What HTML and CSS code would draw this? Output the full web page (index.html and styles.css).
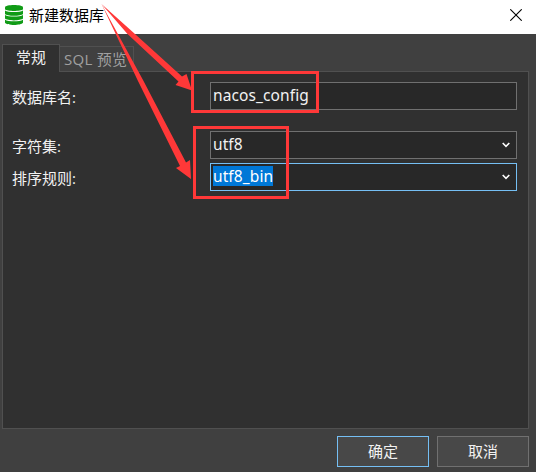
FILE: index.html
```html
<!DOCTYPE html>
<html lang="zh-CN">
<head>
<meta charset="utf-8">
<title>新建数据库</title>
<link rel="stylesheet" href="styles.css">
</head>
<body>
<div class="dialog">
  <header class="titlebar">
    <svg class="db-icon" width="18" height="20" viewBox="0 0 18 20">
      <g fill="#109b16">
        <path d="M0 2.400C0-.8 18-.8 18 2.400V4.200C16 6.500 2 6.500 0 4.200Z"/>
        <path d="M0 5.400C3 7.400 15 7.400 18 5.400V8.900C16 11.300 2 11.300 0 8.900Z"/>
        <path d="M0 10.100C3 12.100 15 12.100 18 10.100V13.600C16 16 2 16 0 13.600Z"/>
        <path d="M0 14.800C3 16.800 15 16.800 18 14.800V17.800C16 20.700 2 20.700 0 17.800Z"/>
      </g>
    </svg>
    <span class="title">新建数据库</span>
    <svg class="close" width="12" height="12" viewBox="0 0 12 12"><path d="M.3.3 11.700 11.700M11.700.3.3 11.700" stroke="#000" stroke-width="1.100"/></svg>
  </header>
  <nav class="tabs">
    <div class="tab active">常规</div>
    <div class="tab">SQL 预览</div>
  </nav>
  <main class="panel">
    <div class="row name-row"><label>数据库名:</label><div class="field"><span>nacos_config</span></div></div>
    <div class="row"><label>字符集:</label><div class="field"><span>utf8</span><svg class="chevron" width="8" height="6" viewBox="0 0 8 6"><path d="M.7 1 4 4.300 7.300 1" fill="none" stroke="#fff" stroke-width="1.600"/></svg></div></div>
    <div class="row"><label>排序规则:</label><div class="field focused"><span class="selected">utf8_bin</span><svg class="chevron" width="8" height="6" viewBox="0 0 8 6"><path d="M.7 1 4 4.300 7.300 1" fill="none" stroke="#fff" stroke-width="1.600"/></svg></div></div>
  </main>
  <footer class="actions">
    <div class="button primary">确定</div>
    <div class="button">取消</div>
  </footer>
  <svg class="annotations" width="536" height="472" viewBox="0 0 536 472">
    <g fill="none" stroke="#ff3838" stroke-width="3">
      <rect x="192.500" y="72.500" width="125" height="39"/>
      <rect x="194.500" y="127.500" width="93" height="70"/>
    </g>
    <g fill="#ff3838">
      <path d="M101.500 4 135 34 182 76.500 186.500 74 192 90.500 175.500 85 178.500 81.500 127.500 34Z"/>
      <path d="M101.500 4 143 80 186 162.500 190 160 191 179 176 168 180 166 137.500 80Z"/>
    </g>
  </svg>
</div>
</body>
</html>
```
FILE: styles.css
```css
* { box-sizing: border-box; }
body {
  margin: 0;
  font-family: "Open Sans", "Noto Sans CJK SC", sans-serif;
  font-size: 15px;
  color: #f2f2f2;
}
.dialog {
  position: relative;
  width: 536px;
  height: 472px;
  background: #404040;
  overflow: hidden;
}
.titlebar {
  display: flex;
  align-items: center;
  height: 34px;
  padding: 0 14px 4px 5px;
  background: #fff;
  color: #000;
}
.db-icon { flex: none; }
.title { margin-left: 6px; line-height: 30px; }
.close { margin-left: auto; }
.tabs {
  display: flex;
  align-items: flex-end;
  height: 37px;
  padding-left: 2px;
}
.tab {
  width: 75px;
  height: 26px;
  margin-left: -1px;
  margin-bottom: -1px;
  padding-left: 4px;
  border: 1px solid #505050;
  line-height: 25px;
  letter-spacing: .3px;
  white-space: nowrap;
  color: #a0a0a0;
}
.tab.active {
  position: relative;
  width: 58px;
  height: 28px;
  margin-left: 0;
  padding-left: 13px;
  border-bottom: 0;
  background: #303030;
  letter-spacing: 0;
  color: #f2f2f2;
}
.panel {
  width: 527px;
  height: 358px;
  margin-left: 2px;
  padding: 10px 11px 0 9px;
  border: 1px solid #505050;
  background: #303030;
}
.row {
  display: flex;
  height: 28px;
  margin-bottom: 4px;
}
.name-row { margin-bottom: 21px; }
.row label { width: 198px; line-height: 30px; }
.field {
  display: flex;
  flex: 1;
  align-items: center;
  padding: 0 6px 0 2px;
  border: 1px solid #707070;
  background: #282828;
}
.field span {
  margin-bottom: 2px;
  line-height: 20px;
  font-family: "Noto Sans", sans-serif;
  font-size: 15.5px;
  letter-spacing: .1px;
}
.selected { background: #0078d7; color: #fff; }
.chevron { margin-left: auto; }
.focused { border-color: #75bff4; }
.actions {
  display: flex;
  justify-content: flex-end;
  gap: 8px;
  padding: 7px 7px 0;
}
.button {
  width: 92px;
  height: 31px;
  border: 1px solid #707070;
  background: #484848;
  line-height: 29px;
  text-align: center;
}
.primary { border-color: #75bff4; }
.annotations { position: absolute; inset: 0; }
```
